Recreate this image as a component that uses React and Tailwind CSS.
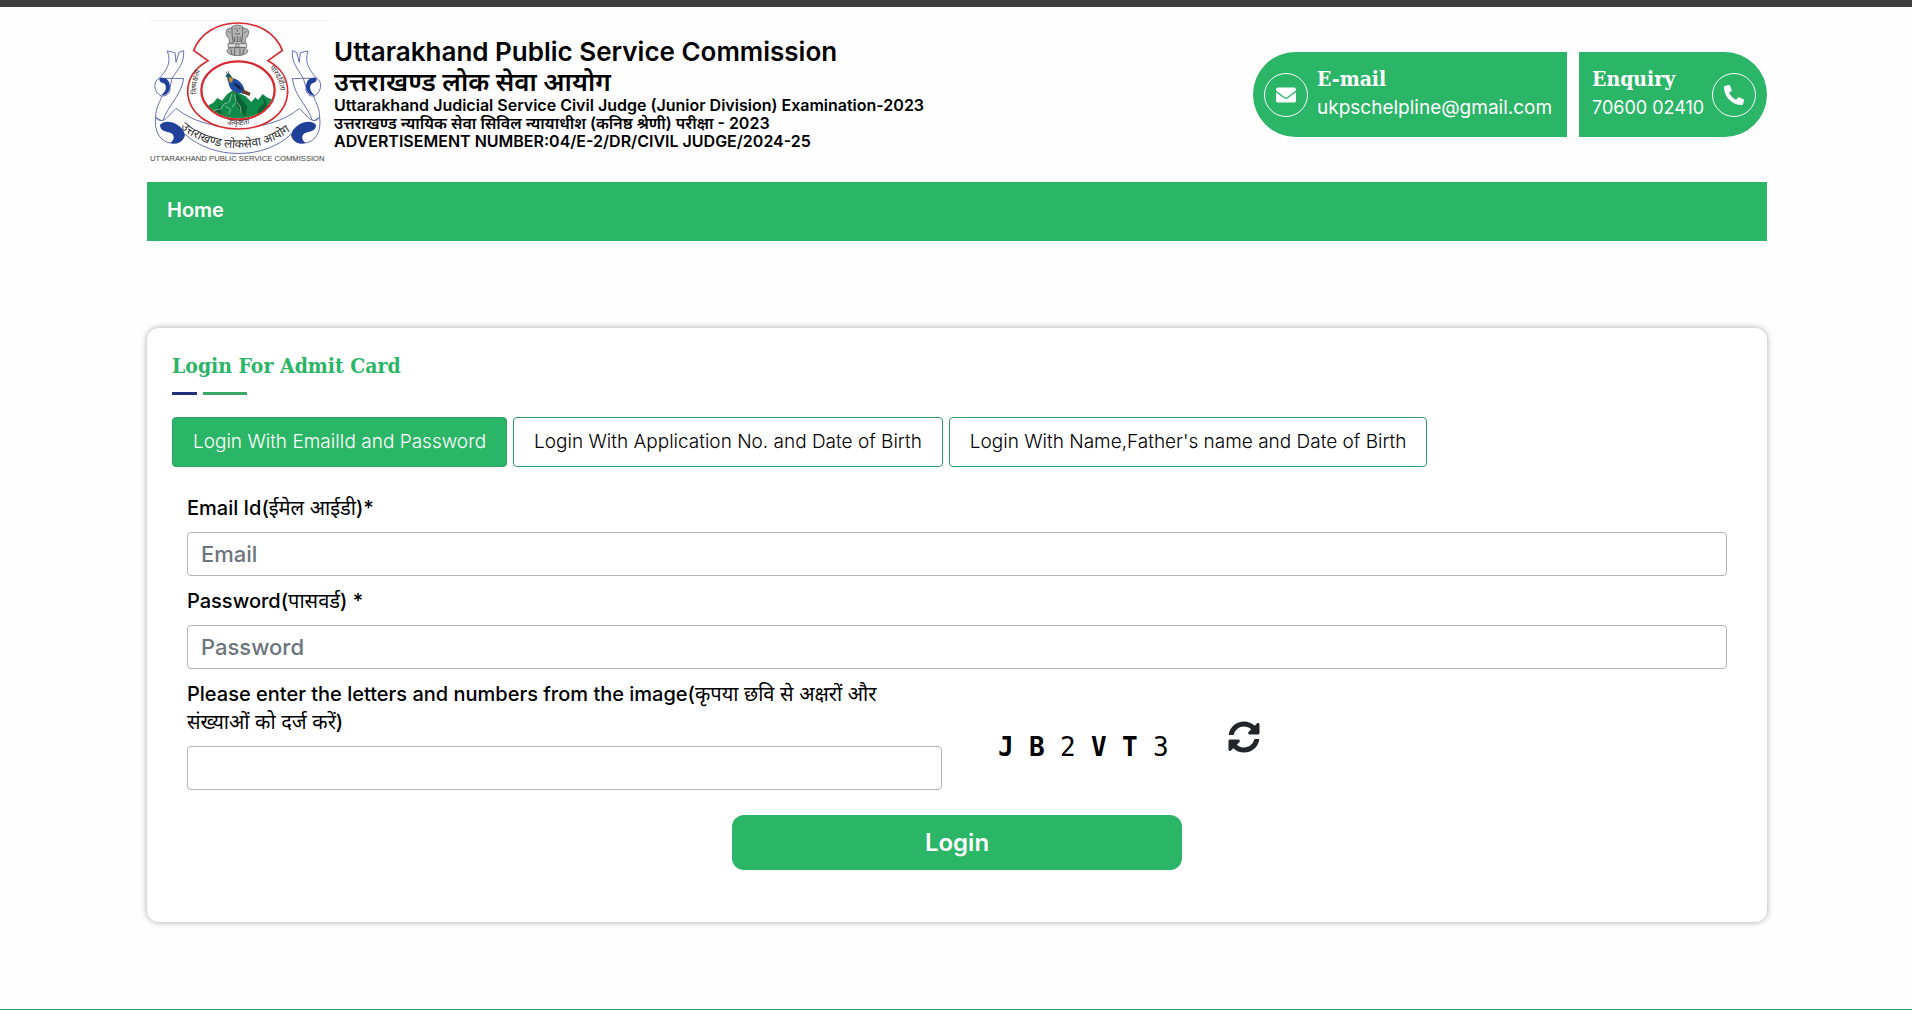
import { useState } from 'react'
import { FaEnvelope, FaPhoneAlt, FaSyncAlt } from 'react-icons/fa'

const tabs = [
    'Login With EmailId and Password',
    'Login With Application No. and Date of Birth',
    "Login With Name,Father's name and Date of Birth",
]

const captcha = [
    { char: 'J', className: 'font-bold' },
    { char: 'B', className: 'font-bold' },
    { char: '2', className: 'font-normal' },
    { char: 'V', className: 'font-bold' },
    { char: 'T', className: 'font-bold' },
    { char: '3', className: 'font-normal' },
]

const labelClass = 'block pb-[10px] text-xl leading-7 font-medium text-black'
const inputClass = 'block w-full h-11 rounded border border-[#b1b3b6] bg-white px-[13px] text-[22px] font-medium text-[#495057] placeholder:text-[#6c757d] outline-none focus:border-[#2bb567]'

function Logo() {
    return (
        <svg viewBox="21 60 561 432" className="w-[187px] h-36 shrink-0" role="img" aria-label="Uttarakhand Public Service Commission">
            <defs>
                <path id="arcLeft" d="M172 282 Q162 222 204 178" />
                <path id="arcRight" d="M388 204 Q424 240 422 300" />
                <path id="arcBottom" d="M240 366 Q294 386 350 364" />
                <path id="arcRibbon" d="M98 362 C190 466 380 474 474 370" />
                <clipPath id="disc"><ellipse cx="294" cy="271" rx="107" ry="84" /></clipPath>
            </defs>
            <path d="M24 61H588" stroke="#ececec" strokeWidth="2" />

            {/* Ribbon */}
            <g fill="#fff" stroke="#4a55a0" strokeWidth="2.5" strokeLinejoin="round">
                <path d="M82 153 L105 158 L108 187 L117 157 L131 152 C133 190 116 204 96 235 L58 235 C78 212 96 190 82 153Z" />
                <path d="M504 153 L481 158 L478 187 L470 157 L457 152 C455 190 472 204 490 235 L530 235 C510 212 492 190 504 153Z" />
                <path d="M58 235 C38 244 40 276 64 288 C82 290 92 276 90 262 L96 235 L131 236 C122 290 82 318 68 364 L47 352 C46 318 66 300 64 288" />
                <path d="M530 235 C548 244 546 276 522 288 C504 290 496 276 498 262 L490 235 L457 236 C464 290 504 318 518 364 L539 352 C540 318 520 300 522 288" />
                <path d="M47 352 C42 392 58 426 96 430 C118 432 132 420 134 402 C220 480 372 480 454 402 C456 420 470 432 490 430 C530 426 544 392 539 352 C530 366 516 364 504 352 L478 325 C390 402 200 402 108 325 L82 352 C72 364 56 366 47 352Z" />
            </g>
            <g fill="#21409a">
                <path d="M58 235 C74 230 90 238 90 262 C88 280 76 288 64 286 C76 276 82 262 74 252 C66 246 58 250 58 235Z" />
                <path d="M530 235 C514 230 498 238 498 262 C500 280 512 288 524 286 C512 276 506 262 514 252 C522 246 530 250 530 235Z" />
                <path d="M60 374 C72 360 96 364 112 374 C126 384 134 394 134 404 C132 424 112 434 92 428 C104 420 104 406 94 400 C80 392 60 396 60 374Z" />
                <path d="M528 374 C516 360 492 364 476 374 C462 384 454 394 454 404 C456 424 476 434 496 428 C484 420 484 406 494 400 C508 392 528 396 528 374Z" />
            </g>

            {/* Red keyhole outline */}
            <path d="M204 182 L161 151 C182 98 234 69 294 69 C354 69 406 98 427 151 L384 182 C424 204 443 232 443 276 C440 344 374 387 294 387 C214 387 146 344 143 276 C143 232 164 204 204 182Z" fill="#fff" stroke="#d9292f" strokeWidth="5" />
            <ellipse cx="294" cy="271" rx="110" ry="87" fill="#fff" stroke="#d9292f" strokeWidth="7" />

            {/* Hills */}
            <g clipPath="url(#disc)">
                <path d="M190 342 L206 316 L220 308 L232 294 L246 302 L262 282 L280 270 L298 280 L316 288 L334 306 L346 292 L354 300 L368 282 L380 292 L400 300 V370 H190Z" fill="#0f8a48" />
                <path d="M288 276 L306 300 L322 320 L316 350 L300 332 L288 310Z M368 284 L372 312 L356 324 L350 350 L384 320Z M232 296 L238 318 L226 334 L248 346Z" fill="#0a6133" />
                <path d="M276 282 L268 306 L252 312 L244 326 L218 332 M284 284 L288 304 L300 318 L304 338 M256 318 L272 328 L266 344 M286 308 L276 322" stroke="#eaf5ee" strokeWidth="1.5" fill="none" />
            </g>

            {/* Monal */}
            <path d="M266 218 Q258 222 256 230 L262 232 Q260 246 272 250 L280 236 L272 226Z" fill="#1d5c63" />
            <path d="M262 224 L258 215 M266 221 L265 213" stroke="#33415c" strokeWidth="2" />
            <path d="M268 234 Q284 232 296 242 Q310 252 314 272 L330 278 L330 286 L304 280 Q282 278 272 266 Q262 252 268 234Z" fill="#1f4fa3" />
            <path d="M268 232 L280 234 L276 248 Q268 248 266 240Z" fill="#c98b2d" />
            <path d="M280 248 Q298 250 308 270 Q290 268 280 248Z" fill="#17254f" />
            <path d="M308 268 L332 279 L328 288 L306 279Z" fill="#6b4030" />
            <path d="M286 274 L280 284" stroke="#7a5a34" strokeWidth="3" />

            {/* National emblem */}
            <g stroke="#4d4d4d" strokeWidth="2" fill="#b4b4b4">
                <path d="M276 80 Q292 70 308 80 Q314 92 308 104 L304 126 H280 L276 104 Q270 92 276 80Z" />
                <path d="M276 84 Q256 84 258 100 Q260 112 268 116 L268 130 H280 L276 104Z M308 84 Q328 84 326 100 Q324 112 316 116 L316 130 H304 L308 104Z" />
                <path d="M264 131 H320 V142 H264Z" fill="#dedede" />
                <path d="M268 143 H316 L324 152 Q320 166 292 167 Q264 166 260 152Z" />
            </g>
            <g stroke="#3c3c3c" strokeWidth="2" fill="none">
                <circle cx="292" cy="137" r="5" />
                <path d="M284 86 H289 M296 86 H301 M292 88 V96 M284 100 Q292 106 300 100 M284 110 V124 M292 108 V126 M300 110 V124 M264 94 L270 98 M320 94 L314 98 M272 146 L276 164 M284 146 V166 M300 146 V166 M312 146 L308 164" />
            </g>

            <g fontFamily="'Noto Sans', sans-serif" fill="#303030">
                <text fontSize="22"><textPath href="#arcLeft">निष्पक्षता</textPath></text>
                <text fontSize="22"><textPath href="#arcRight">पारदर्शिता</textPath></text>
                <text fontSize="23"><textPath href="#arcBottom" startOffset="50%" textAnchor="middle">उत्कृष्टता</textPath></text>
                <text fontSize="36"><textPath href="#arcRibbon" startOffset="50%" textAnchor="middle">उत्तराखण्ड लोकसेवा आयोग</textPath></text>
            </g>
            <text x="292" y="484" textAnchor="middle" fontFamily="'Liberation Sans', sans-serif" fontSize="23" fill="#444">UTTARAKHAND PUBLIC SERVICE COMMISSION</text>
        </svg>
    )
}

function Header() {
    return (
        <header className="flex items-start justify-between pt-[13px]">
            <div className="flex">
                <Logo />
                <div className="pt-4 font-semibold text-black whitespace-nowrap">
                    <h1 className="text-[26px] leading-8">Uttarakhand Public Service Commission</h1>
                    <p className="text-[26px] leading-7">उत्तराखण्ड लोक सेवा आयोग</p>
                    <p className="text-base leading-[18px]">Uttarakhand Judicial Service Civil Judge (Junior Division) Examination-2023</p>
                    <p className="text-base leading-[18px]">उत्तराखण्ड न्यायिक सेवा सिविल न्यायाधीश (कनिष्ठ श्रेणी) परीक्षा - 2023</p>
                    <p className="text-base leading-[18px]">ADVERTISEMENT NUMBER:04/E-2/DR/CIVIL JUDGE/2024-25</p>
                </div>
            </div>
            <div className="mt-8 flex gap-3 text-white whitespace-nowrap">
                <div className="flex h-[85px] w-[314px] items-center gap-[9px] rounded-l-full bg-[#2bb567] pl-[11px]">
                    <span className="flex size-11 items-center justify-center rounded-full border border-white">
                        <FaEnvelope className="size-5" />
                    </span>
                    <div className="pb-[2px]">
                        <h2 className="font-['DejaVu_Serif_Condensed','DejaVu_Serif',serif] text-[21px] leading-7 font-bold">E-mail</h2>
                        <a href="mailto:ukpschelpline@gmail.com" className="block text-[19px] leading-[30px]">ukpschelpline@gmail.com</a>
                    </div>
                </div>
                <div className="flex h-[85px] w-[188px] items-center justify-between rounded-r-full bg-[#2bb567] pr-[11px] pl-[13px]">
                    <div className="pb-[2px]">
                        <h2 className="font-['DejaVu_Serif_Condensed','DejaVu_Serif',serif] text-[21px] leading-7 font-bold">Enquiry</h2>
                        <a href="tel:7060002410" className="block text-lg leading-[30px]">70600 02410</a>
                    </div>
                    <span className="flex size-11 items-center justify-center rounded-full border border-white">
                        <FaPhoneAlt className="size-5" />
                    </span>
                </div>
            </div>
        </header>
    )
}

export default function App() {
    const [active, setActive] = useState(0)

    return (
        <div className="flex min-h-screen flex-col border-t-[7px] border-b border-t-[#3f3f41] border-b-[#2ba56b] bg-[#fefefe] pr-[145px] pl-[147px] font-['Inter','Noto_Sans',sans-serif]">
            <Header />

            <nav className="mt-[18px] h-[59px] bg-[#2bb567] px-5 pt-3">
                <a href="#home" className="text-xl leading-8 font-semibold text-white">Home</a>
            </nav>

            <main className="mt-[87px] rounded-xl bg-white px-[25px] pt-[22px] pb-[52px] shadow-[0_0_6px_rgba(0,0,0,0.35)]">
                <h2 className="font-['DejaVu_Serif_Condensed','DejaVu_Serif',serif] text-[21px] leading-8 font-bold text-[#2bb567]">Login For Admit Card</h2>
                <div className="mt-[10px] flex gap-[6px]">
                    <span className="h-[3px] w-[25px] bg-[#22317a]" />
                    <span className="h-[3px] w-11 bg-[#37a868]" />
                </div>

                <div className="mt-[22px] flex flex-wrap gap-[6px]">
                    {tabs.map((tab, i) => (
                        <button
                            key={tab}
                            type="button"
                            onClick={() => setActive(i)}
                            className={`h-[50px] rounded border border-[#2f9e69] px-5 text-[19px] font-light ${i === active ? 'bg-[#2bb567] text-white' : 'bg-white text-black'}`}
                        >
                            {tab}
                        </button>
                    ))}
                </div>

                <form className="px-[15px] pt-[27px]" onSubmit={(e) => e.preventDefault()}>
                    <label htmlFor="email" className={labelClass}>
                        Email Id(<span className="font-normal">ईमेल आईडी</span>)*
                    </label>
                    <input id="email" type="email" placeholder="Email" className={inputClass} />
                    <label htmlFor="password" className={`mt-[11px] ${labelClass}`}>
                        Password(<span className="font-normal">पासवर्ड</span>) *
                    </label>
                    <input id="password" type="password" placeholder="Password" className={inputClass} />

                    <div className="mt-[11px] flex items-start">
                        <div className="w-[755px]">
                            <label htmlFor="captcha" className={`pr-10 ${labelClass}`}>
                                Please enter the letters and numbers from the image(<span className="font-normal">कृपया छवि से अक्षरों और संख्याओं को दर्ज करें</span>)
                            </label>
                            <input id="captcha" type="text" className={inputClass} />
                        </div>
                        <div className="mt-[41px] ml-14 flex w-[262px] items-start justify-between">
                            <div className="mt-[10px] grid w-[186px] grid-cols-6 font-['DejaVu_Sans_Mono',monospace] text-[26px] leading-8 text-black">
                                {captcha.map((c) => (
                                    <span key={c.char} className={c.className}>{c.char}</span>
                                ))}
                            </div>
                            <button type="button" aria-label="Refresh captcha" className="text-[#212529]">
                                <FaSyncAlt className="size-8" />
                            </button>
                        </div>
                    </div>

                    <button type="submit" className="mx-auto mt-[25px] block h-[55px] w-[450px] rounded-xl bg-[#2bb567] text-2xl font-semibold text-white">
                        Login
                    </button>
                </form>
            </main>
        </div>
    )
}
